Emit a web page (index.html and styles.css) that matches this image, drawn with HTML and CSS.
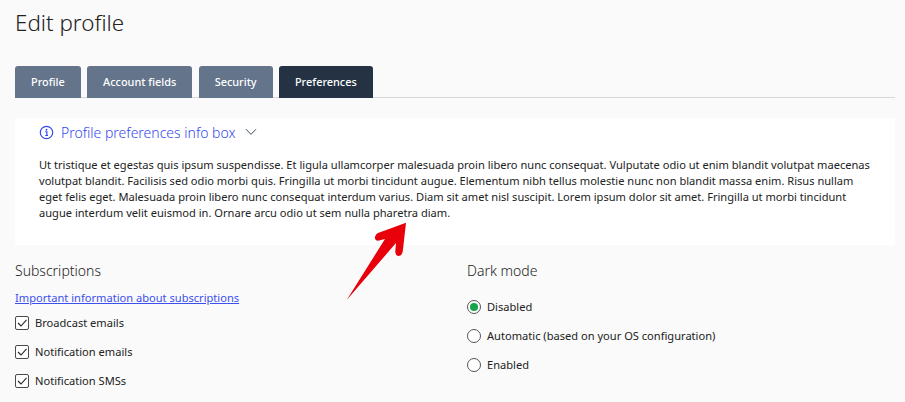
FILE: index.html
```html
<!DOCTYPE html>
<html lang="en">
<head>
<meta charset="UTF-8" />
<meta name="viewport" content="width=device-width, initial-scale=1" />
<title>Edit profile</title>
<link rel="stylesheet" href="styles.css">
</head>
<body>

<h1 class="page-title">Edit profile</h1>

<div class="tabs">
  <a class="tab">Profile</a>
  <a class="tab">Account fields</a>
  <a class="tab">Security</a>
  <a class="tab active">Preferences</a>
</div>

<div class="info-box">
  <div class="info-title">
    <svg class="info-icon" viewBox="0 0 16 16" width="15" height="15">
      <circle cx="8" cy="8" r="6.6" fill="none" stroke="currentColor" stroke-width="1.3"/>
      <circle cx="8" cy="5" r="1" fill="currentColor"/>
      <path d="M6.6 7.2H8.4V11M6.6 11.2H9.6" fill="none" stroke="currentColor" stroke-width="1.3"/>
    </svg>
    <span>Profile preferences info box</span>
    <svg class="chevron" viewBox="0 0 12 8" width="12" height="8">
      <path d="M1 1.2L6 6.4L11 1.2" fill="none" stroke="#3f4a5a" stroke-width="1"/>
    </svg>
  </div>
  <p class="info-text">Ut tristique et egestas quis ipsum suspendisse. Et ligula ullamcorper malesuada proin libero nunc consequat. Vulputate odio ut enim blandit volutpat maecenas volutpat blandit. Facilisis sed odio morbi quis. Fringilla ut morbi tincidunt augue. Elementum nibh tellus molestie nunc non blandit massa enim. Risus nullam eget felis eget. Malesuada proin libero nunc consequat interdum varius. Diam sit amet nisl suscipit. Lorem ipsum dolor sit amet. Fringilla ut morbi tincidunt augue interdum velit euismod in. Ornare arcu odio ut sem nulla pharetra diam.</p>
</div>

<div class="columns">
  <div class="col">
    <h2>Subscriptions</h2>
    <a class="link">Important information about subscriptions</a>
    <div class="option">
      <svg class="check" viewBox="0 0 14 14" width="14" height="14">
        <rect x="0.5" y="0.5" width="13" height="13" rx="1.5" fill="#fff" stroke="#4a4a4a"/>
        <path d="M3 7L6 10L11.5 3.8" fill="none" stroke="#222" stroke-width="1.1"/>
      </svg>
      <span>Broadcast emails</span>
    </div>
    <div class="option">
      <svg class="check" viewBox="0 0 14 14" width="14" height="14">
        <rect x="0.5" y="0.5" width="13" height="13" rx="1.5" fill="#fff" stroke="#4a4a4a"/>
        <path d="M3 7L6 10L11.5 3.8" fill="none" stroke="#222" stroke-width="1.1"/>
      </svg>
      <span>Notification emails</span>
    </div>
    <div class="option">
      <svg class="check" viewBox="0 0 14 14" width="14" height="14">
        <rect x="0.5" y="0.5" width="13" height="13" rx="1.5" fill="#fff" stroke="#4a4a4a"/>
        <path d="M3 7L6 10L11.5 3.8" fill="none" stroke="#222" stroke-width="1.1"/>
      </svg>
      <span>Notification SMSs</span>
    </div>
  </div>
  <div class="col">
    <h2 class="dark-title">Dark mode</h2>
    <div class="option"><span class="radio checked"></span><span>Disabled</span></div>
    <div class="option"><span class="radio"></span><span>Automatic (based on your OS configuration)</span></div>
    <div class="option"><span class="radio"></span><span>Enabled</span></div>
  </div>
</div>

<!-- annotation arrow on top of the screenshot -->
<svg class="arrow" viewBox="0 0 70 90" width="70" height="90">
  <path d="M1.7 82L40 21L33 22.7Q29.5 22.5 30 19Q30.5 16 33 15L61 4.7L57.8 33Q57 38 53.5 38Q50.3 38 50.3 33L51 25Z" fill="#e8000b"/>
</svg>

</body>
</html>
```

FILE: styles.css
```css
* {
  box-sizing: border-box;
}
html, body {
  height: 402px;
  overflow: hidden;
}
body {
  margin: 0;
  padding: 0 10px 0 15px;
  background: #fafafa;
  font-family: "Noto Sans", sans-serif;
  font-size: 11.1px;
  color: #222;
  position: relative;
}
.page-title {
  margin: 0;
  padding-top: 5px;
  height: 66px;
  font-size: 22.4px;
  line-height: 35px;
  font-weight: 300;
  color: #222;
}
.tabs {
  display: flex;
  gap: 6.4px;
  height: 32px;
  border-bottom: 1px solid #d8d8d8;
}
.tab {
  height: 32px;
  padding: 0 16px;
  line-height: 32px;
  background: #64748b;
  color: #fff;
  font-weight: 500;
  font-size: 10.9px;
  border-radius: 3px 3px 0 0;
}
.tab.active {
  background: #253244;
}
.info-box {
  margin-top: 20px;
  height: 127px;
  padding: 4px 24px 0;
  background: #fff;
}
.info-title {
  display: flex;
  align-items: center;
  height: 20px;
  gap: 7px;
  font-size: 14px;
  font-weight: 300;
  color: #3548ee;
}
.chevron {
  margin-left: 2px;
}
.info-text {
  margin: 15px 0 0;
  line-height: 16px;
  font-size: 11.1px;
}
.columns {
  display: grid;
  grid-template-columns: 452px 1fr;
  margin-top: 15px;
}
h2 {
  margin: 0;
  font-size: 14px;
  font-weight: 300;
  line-height: 22px;
}
.link {
  display: block;
  margin: 8px 0 2px;
  line-height: 16px;
  color: #3c50ee;
  text-decoration: underline;
}
.col .dark-title {
  margin-bottom: 10px;
}
.option {
  display: flex;
  align-items: center;
  gap: 6px;
  height: 29px;
}
.radio {
  width: 14px;
  height: 14px;
  border: 1px solid #555;
  border-radius: 50%;
  background: #fff;
  position: relative;
}
.radio.checked::after {
  content: "";
  position: absolute;
  top: 2px;
  left: 2px;
  width: 8px;
  height: 8px;
  border-radius: 50%;
  background: #16a34a;
}
.arrow {
  position: absolute;
  left: 345px;
  top: 218px;
}
```
